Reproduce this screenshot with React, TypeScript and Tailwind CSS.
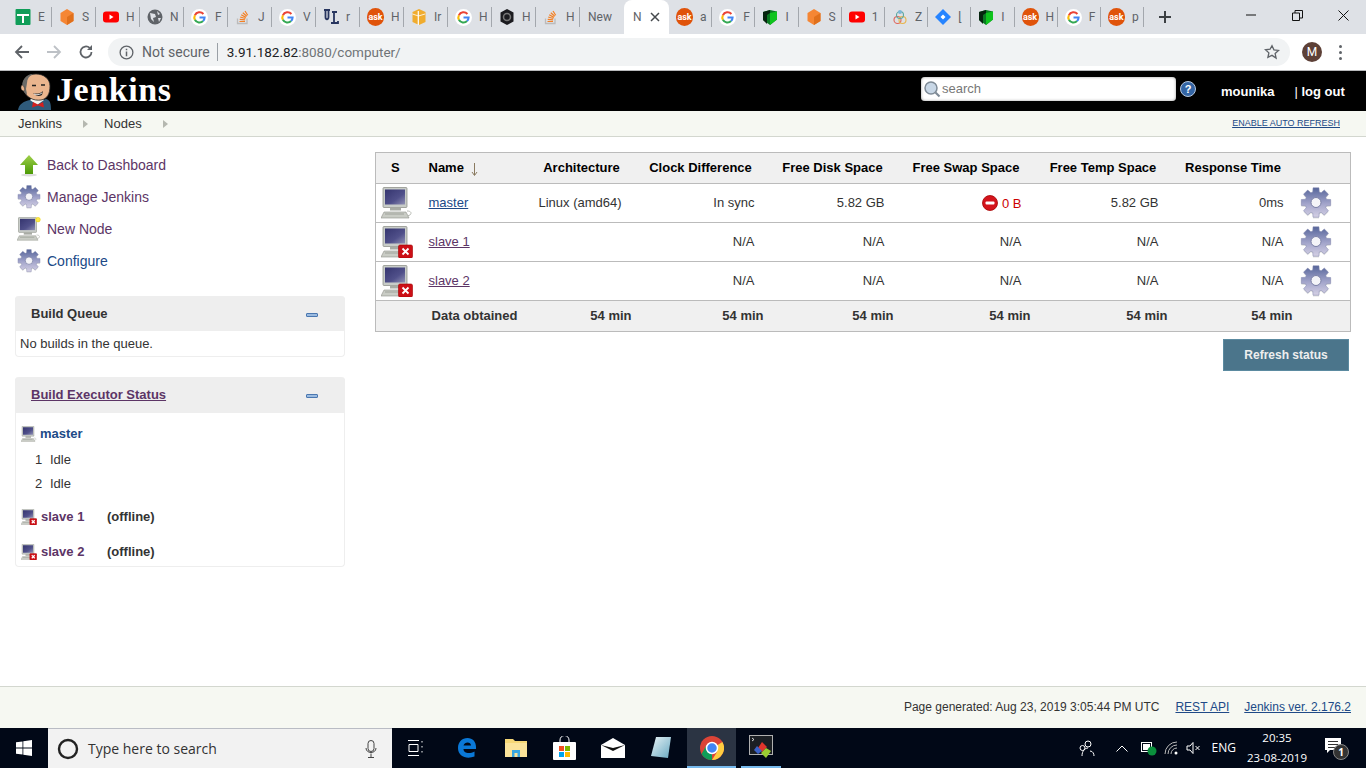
import React from "react";

const gearPath = (() => {
  const cx = 16, cy = 15.5, ro = 15, ri = 11, n = 8;
  let d = "";
  for (let i = 0; i < n; i++) {
    const a = (i / n) * Math.PI * 2 - Math.PI / 2;
    const w = 0.2, g = 0.3;
    const pts = [
      [ri, a - g], [ro, a - w], [ro, a + w], [ri, a + g],
    ];
    for (const [r, t] of pts) {
      d += (d ? "L" : "M") + (cx + r * Math.cos(t)).toFixed(2) + " " + (cy + r * Math.sin(t)).toFixed(2);
    }
  }
  return d + "Z";
})();

function Gear({ id, size = 32 }: { id: string; size?: number }) {
  return (
    <svg width={size} height={size} viewBox="0 0 32 32" className="block shrink-0">
      <defs>
        <linearGradient id={id} x1="0" y1="0" x2="0" y2="1">
          <stop offset="0" stopColor="#56659a" />
          <stop offset="0.55" stopColor="#a3a5cb" />
          <stop offset="1" stopColor="#d4d0e4" />
        </linearGradient>
      </defs>
      <path d={gearPath} fill="#000" opacity="0.12" transform="translate(0 1.2)" />
      <path d={gearPath} fill={`url(#${id})`} stroke="#8187ad" strokeWidth="0.5" />
      <circle cx="16" cy="15.5" r="5" fill="#f4f4f8" stroke="#7b80a6" strokeWidth="1" />
    </svg>
  );
}

function Computer({ id, size = 32, badge, star, tiny }: { id: string; size?: number; badge?: boolean; star?: boolean; tiny?: boolean }) {
  return (
    <svg width={size} height={size} viewBox="0 0 32 32" className="block shrink-0">
      <defs>
        <linearGradient id={id} x1="0" y1="0" x2="1" y2="1">
          <stop offset="0" stopColor="#35356f" />
          <stop offset="0.6" stopColor="#50508a" />
          <stop offset="1" stopColor="#9090b4" />
        </linearGradient>
      </defs>
      <rect x="2" y="0.500" width="24" height="20" rx="1" fill="#c8ccc8" stroke="#85887f" strokeWidth="0.7" />
      <rect x="4" y="2.500" width="20" height="15" fill={`url(#${id})`} />
      <rect x="9" y="20.500" width="11" height="3" fill="#a8aba4" />
      <path d="M3 25h22l3 6H0z" fill="#c9ccc5" stroke="#8e9189" strokeWidth="0.6" />
      <path d="M4 27h19" stroke="#8e9189" strokeWidth="0.7" />
      {!badge && <path d="M26 24c4 0 5 2 3 4l-3 1" fill="none" stroke="#b8bbb4" strokeWidth="1" />}
      {badge && (
        <g>
          <rect x="17.500" y="19" width="14" height="13" rx="1.500" fill="#cc0f16" stroke="#a40000" strokeWidth="0.6" />
          <path d="M21.500 22.500l6 6M27.500 22.500l-6 6" stroke="#fff" strokeWidth={tiny ? 2.4 : 1.8} />
        </g>
      )}
      {star && <circle cx="28" cy="3.500" r="3" fill="#fce94f" stroke="#edd400" strokeWidth="0.8" />}
    </svg>
  );
}

function Butler() {
  return (
    <svg width="36" height="38" viewBox="0 0 36 38" className="block shrink-0">
      <path d="M0 37c1-6 6-9 12-10l8 1 8-2c4 1 5 4 5 11z" fill="#2f5a7a" />
      <path d="M12 27l7 5 7-5-2-2H14z" fill="#f4f4f0" />
      <path d="M15 29l5 2.500 5-2.500 1 5.500-6-2-6 2z" fill="#d3201f" />
      <path d="M5 16C3 6 10 1 18 1c8 0 14 5 14 12 0 8-3 13-9 14-7 1-15-2-18-11z" fill="#eab58e" stroke="#2a2a2a" strokeWidth="0.8" />
      <path d="M5 17C2 8 8 1 15 1c-4 2-6 5-6 9l-1 6 1 5c-2 0-3-2-4-4z" fill="#6b6b68" />
      <path d="M4 12c-2 2-1 6 2 6 1 0 1-5-2-6z" fill="#eab58e" stroke="#2a2a2a" strokeWidth="0.5" />
      <path d="M14 12.500h4M23 12h4" stroke="#222" strokeWidth="1.300" />
      <path d="M15 20c3 1 7 1 10-2l-1 4c-3 2-6 1-9-2z" fill="#2a2a2a" />
      <path d="M16 21c3 1 5 1 8-1" stroke="#fff" strokeWidth="0.8" fill="none" />
    </svg>
  );
}

function G() {
  return (
    <svg width="17" height="17" viewBox="0 0 20 20" className="block shrink-0">
      <circle cx="10" cy="10" r="10" fill="#fff" />
      <path d="M14.600 5.900A6 6 0 0 0 4.600 7.300" fill="none" stroke="#ea4335" strokeWidth="2.400" />
      <path d="M4.600 7.300a6 6 0 0 0 0 5.400" fill="none" stroke="#fbbc05" strokeWidth="2.400" />
      <path d="M4.600 12.700a6 6 0 0 0 9.600 1.500" fill="none" stroke="#34a853" strokeWidth="2.400" />
      <path d="M14.200 14.200A6 6 0 0 0 16 10h-6" fill="none" stroke="#4285f4" strokeWidth="2.400" />
    </svg>
  );
}

function Ask() {
  return (
    <span className="flex h-[18px] w-[17px] shrink-0 items-center justify-center rounded-full bg-[#e0530a] text-[9px] font-bold leading-none text-white">ask</span>
  );
}

function Fav({ k }: { k: string }) {
  const s = { width: 16, height: 16, viewBox: "0 0 16 16", className: "block shrink-0" };
  switch (k) {
    case "sheet":
      return <svg {...s}><rect x="0.500" y="0" width="15" height="16" rx="1" fill="#0f9d58" /><path d="M2 5h12v2H9v7H7V7H2z" fill="#fff" /></svg>;
    case "box":
      return <svg {...s}><path d="M8 0l6.500 4v8L8 16l-6.500-4V4z" fill="#f58634" /><path d="M8 8l6.500-4v8L8 16z" fill="#e0701c" /></svg>;
    case "yt":
      return <svg {...s}><rect x="0" y="2.500" width="16" height="11" rx="3" fill="#f00" /><path d="M6.500 5.500l4 2.500-4 2.500z" fill="#fff" /></svg>;
    case "globe":
      return <svg {...s}><circle cx="8" cy="8" r="7.500" fill="#5f6368" /><path d="M3 4l5 1 1 3-3 1 1 4-3-3zM10 2l3 3-2 1zM11 9l3 0-2 4z" fill="#dee1e6" /></svg>;
    case "so":
      return <svg {...s}><path d="M2.500 9.500v5h9.500v-5" fill="none" stroke="#bcbbbb" strokeWidth="1.300" /><path d="M4.500 12.500h5.500M4.700 10.300l5.400.6M5.200 8l5.200 1.500M6.200 5.800l4.700 2.600M7.800 3.700l4 3.500M10 2l2.700 4.300" stroke="#f48024" strokeWidth="1.200" /></svg>;
    case "ul":
      return <svg {...s}><path d="M1 1h6M2.500 1v7c0 3 3 3 3 0V1M9 3h5M11 3v11M8 14h7v-2" fill="none" stroke="#27355f" strokeWidth="1.800" /></svg>;
    case "aws":
      return <svg {...s}><path d="M8 0l6.500 3v10L8 16l-6.500-3V3z" fill="#f0ac2e" /><path d="M7.300 2v14" stroke="#fff" strokeWidth="1.200" /><path d="M1.500 5l6 2 6.500-2" fill="none" stroke="#fff" strokeWidth="0.800" /></svg>;
    case "hex":
      return <svg {...s}><path d="M8 0l6.500 3.500v9L8 16l-6.500-3.500v-9z" fill="#1b1b1f" /><circle cx="8" cy="8" r="3.500" fill="none" stroke="#777" strokeWidth="1.500" /></svg>;
    case "shield":
      return <svg {...s}><path d="M8 1l7 1.500v8L8 16 1 11V3z" fill="#0a7a22" /><path d="M1 3l7-2v3L5 6v9l-4-4z" fill="#06240f" /><path d="M8 4l7-1.500v8L8 16z" fill="#0ec41d" /></svg>;
    case "rings":
      return <svg {...s}><circle cx="5.500" cy="11" r="3.500" fill="none" stroke="#e0645a" strokeWidth="1.100" /><circle cx="10.500" cy="11" r="3.500" fill="none" stroke="#e9b44c" strokeWidth="1.100" /><circle cx="8" cy="6" r="3.500" fill="none" stroke="#5ba7a0" strokeWidth="1.100" /><circle cx="8" cy="3" r="2" fill="#7db6d6" /></svg>;
    case "jira":
      return <svg {...s}><path d="M8 0l8 8-8 8-8-8z" fill="#2684ff" /><path d="M8 5.500L10.500 8 8 10.500 5.500 8z" fill="#fff" /></svg>;
    default:
      return null;
  }
}

type TabDef = { k: string; t: string };
const leftTabs: TabDef[] = [
  { k: "sheet", t: "E" }, { k: "box", t: "S" }, { k: "yt", t: "H" }, { k: "globe", t: "N" },
  { k: "g", t: "F" }, { k: "so", t: "J" }, { k: "g", t: "V" }, { k: "ul", t: "r" },
  { k: "ask", t: "H" }, { k: "aws", t: "Ir" }, { k: "g", t: "H" }, { k: "hex", t: "H" }, { k: "so", t: "H" },
];
const rightTabs: TabDef[] = [
  { k: "ask", t: "a" }, { k: "g", t: "F" }, { k: "shield", t: "I" }, { k: "box", t: "S" },
  { k: "yt", t: "1" }, { k: "rings", t: "Z" }, { k: "jira", t: "[" }, { k: "shield", t: "I" },
  { k: "ask", t: "H" }, { k: "g", t: "F" }, { k: "ask", t: "p" },
];

function Tab({ tab, narrow }: { tab: TabDef; narrow?: boolean }) {
  return (
    <div className={`flex h-[20px] shrink-0 items-center gap-[7px] border-r border-[#a3a7ad] pl-[7px] ${narrow ? "w-[43.200px]" : "w-[44px]"}`}>
      {tab.k === "g" ? <G /> : tab.k === "ask" ? <Ask /> : <Fav k={tab.k} />}
      <span className="w-[8px] overflow-hidden text-[12px] leading-none text-[#5f6368]">{tab.t}</span>
    </div>
  );
}

function TabStrip() {
  return (
    <div className="flex h-[34px] items-center bg-[#dee1e6] pl-[8px] font-['Roboto',sans-serif]">
      {leftTabs.map((t, i) => <Tab key={i} tab={t} />)}
      <div className="flex h-[20px] w-[44px] shrink-0 items-center overflow-hidden pl-[8px] text-[12px] text-[#5f6368]">New</div>
      <div className="flex h-[34px] w-[45px] shrink-0 items-center justify-between self-end rounded-t-[8px] bg-white px-[9px] text-[12px] text-[#5f6368]">
        <span>N</span>
        <svg width="10" height="10" viewBox="0 0 10 10"><path d="M1 1l8 8M9 1l-8 8" stroke="#45494d" strokeWidth="1.500" /></svg>
      </div>
      {rightTabs.map((t, i) => <Tab key={i} tab={t} narrow />)}
      <div className="ml-[11px] flex w-[20px] items-center justify-center">
        <svg width="14" height="14" viewBox="0 0 14 14"><path d="M7 1v12M1 7h12" stroke="#3c4043" strokeWidth="2" /></svg>
      </div>
      <div className="ml-auto flex h-[34px] items-start">
        <div className="flex h-[30px] w-[46px] items-center justify-center"><svg width="10" height="10" viewBox="0 0 10 10"><path d="M0 5h10" stroke="#111" /></svg></div>
        <div className="flex h-[30px] w-[46px] items-center justify-center"><svg width="11" height="11" viewBox="0 0 11 11"><path d="M.5 3h7v7.500h-7zM3 3V.500h7.500V8H8" fill="none" stroke="#111" /></svg></div>
        <div className="flex h-[30px] w-[46px] items-center justify-center"><svg width="11" height="11" viewBox="0 0 11 11"><path d="M.5.500l10 10M10.500.500l-10 10" stroke="#111" /></svg></div>
      </div>
    </div>
  );
}

function Toolbar() {
  return (
    <div className="flex h-[37px] items-start border-b border-[#b7b9bb] bg-white pt-[4px] font-['Roboto',sans-serif]">
      <div className="flex h-[28px] w-[108px] shrink-0 items-center pl-[14px]">
        <svg width="16" height="16" viewBox="0 0 16 16" className="block"><path d="M15 8H2M8 2L2 8l6 6" fill="none" stroke="#5f6368" strokeWidth="1.800" /></svg>
        <svg width="16" height="16" viewBox="0 0 16 16" className="ml-[16px] block"><path d="M1 8h13M8 2l6 6-6 6" fill="none" stroke="#bdc1c6" strokeWidth="1.800" /></svg>
        <svg width="16" height="16" viewBox="0 0 16 16" className="ml-[16px] block"><path d="M13.500 8A5.500 5.500 0 1 1 11.700 3.900" fill="none" stroke="#5f6368" strokeWidth="1.800" /><path d="M14 1v5H9z" fill="#5f6368" /></svg>
      </div>
      <div className="flex h-[28px] w-[1182px] shrink-0 items-center rounded-[14px] bg-[#f1f3f4] pl-[11px] text-[14px]">
        <svg width="15" height="15" viewBox="0 0 16 16" className="block shrink-0"><circle cx="8" cy="8" r="6.800" fill="none" stroke="#5f6368" strokeWidth="1.400" /><path d="M8 7v5M8 4v1.600" stroke="#5f6368" strokeWidth="1.600" /></svg>
        <span className="ml-[8px] text-[#5f6368]">Not secure</span>
        <span className="ml-[7px] h-[18px] w-px bg-[#9aa0a6]" />
        <span className="ml-[9px] text-[13.500px] text-[#202124]">3.91.182.82<span className="text-[#6f7377]">:8080/computer/</span></span>
        <svg width="16" height="16" viewBox="0 0 24 24" className="ml-auto mr-[10px] block"><path d="M12 2.500l2.900 6.300 6.900.8-5.100 4.700 1.400 6.800L12 17l-6.100 3.100 1.400-6.800-5.100-4.700 6.900-.8z" fill="none" stroke="#5f6368" strokeWidth="2" /></svg>
      </div>
      <div className="ml-[12px] flex h-[28px] w-[20px] items-center justify-center rounded-full">
        <span className="flex h-[20px] w-[20px] items-center justify-center rounded-full bg-[#5d4037] text-[12px] text-white">M</span>
      </div>
      <div className="ml-[17px] flex h-[28px] flex-col items-center justify-center gap-[3px]">
        <span className="h-[3px] w-[3px] rounded-full bg-[#5f6368]" />
        <span className="h-[3px] w-[3px] rounded-full bg-[#5f6368]" />
        <span className="h-[3px] w-[3px] rounded-full bg-[#5f6368]" />
      </div>
    </div>
  );
}

function Header() {
  return (
    <div className="flex h-[40px] items-center bg-black pl-[18px] text-white">
      <div className="flex h-[40px] items-end"><Butler /></div>
      <span className="mb-[2px] ml-[2px] w-[115px] whitespace-nowrap font-['Liberation_Serif',serif] text-[34px] font-bold leading-none tracking-[0.6px]">Jenkins</span>
      <div className="mb-[4px] ml-[750px] flex h-[24px] w-[255px] items-center rounded-[4px] bg-white pl-[2px] shadow-[inset_0_0_3px_#999]">
        <svg width="18" height="18" viewBox="0 0 18 18" className="block shrink-0"><circle cx="8" cy="8" r="6" fill="#c8d7e6" stroke="#7e8a96" strokeWidth="1.500" /><path d="M12.500 12.500l4 4" stroke="#7e8a96" strokeWidth="2.200" /></svg>
        <span className="ml-[1px] text-[13px] text-[#777]">search</span>
      </div>
      <svg width="16" height="16" viewBox="0 0 16 16" className="mb-[4px] ml-[4px] block shrink-0">
        <circle cx="8" cy="8" r="7.500" fill="#3465a4" stroke="#b6c8df" />
        <text x="8" y="12" textAnchor="middle" fontSize="11" fontWeight="700" fill="#fff" fontFamily="Liberation Sans">?</text>
      </svg>
      <span className="ml-[25px] mt-[1px] text-[13px] font-bold">mounika</span>
      <span className="ml-[20px] mt-[1px] text-[13px] font-bold"><span className="font-normal">|</span> log out</span>
    </div>
  );
}

function Breadcrumb() {
  const Arrow = () => <svg width="5" height="8" viewBox="0 0 5 8" className="block"><path d="M0 0l5 4-5 4z" fill="#b5b8b0" /></svg>;
  return (
    <div className="flex h-[26px] items-center border-b border-[#d3d7cf] bg-[#f6f8f2] pl-[18px] text-[13px] text-[#333]">
      <span>Jenkins</span>
      <span className="ml-[21px]"><Arrow /></span>
      <span className="ml-[16px]">Nodes</span>
      <span className="ml-[21px]"><Arrow /></span>
      <span className="ml-auto mr-[26px] text-[9px] text-[#204a87] underline">ENABLE AUTO REFRESH</span>
    </div>
  );
}

function Side() {
  return (
    <div className="ml-[15px] w-[330px] shrink-0 pt-[12px] text-[14px]">
      <div className="flex h-[32px] items-center pl-[2px]">
        <svg width="24" height="24" viewBox="0 0 24 24" className="block shrink-0"><defs><linearGradient id="ua" x1="0" x2="0" y1="0" y2="1"><stop offset="0" stopColor="#9fd04a" /><stop offset="1" stopColor="#4c9a06" /></linearGradient></defs><ellipse cx="12" cy="22" rx="8" ry="1.500" fill="#ddd" /><path d="M12 2l9 10h-5v9H8v-9H3z" fill="url(#ua)" /></svg>
        <span className="ml-[6px] text-[#5c3566]">Back to Dashboard</span>
      </div>
      <div className="flex h-[32px] items-center pl-[2px]">
        <Gear id="g1" size={24} />
        <span className="ml-[6px] text-[#5c3566]">Manage Jenkins</span>
      </div>
      <div className="flex h-[32px] items-center pl-[2px]">
        <Computer id="c1" size={24} star />
        <span className="ml-[6px] text-[#5c3566]">New Node</span>
      </div>
      <div className="flex h-[32px] items-center pl-[2px]">
        <Gear id="g2" size={24} />
        <span className="ml-[6px] text-[#204a87]">Configure</span>
      </div>

      <div className="mt-[19px] h-[61px] rounded-[4px] border border-t-0 border-[#eeeeee]">
        <div className="-mx-px flex h-[35px] items-center justify-between rounded-t-[4px] bg-[#eeeeee] pl-[16px] pr-[27px] pt-px">
          <span className="text-[13px] font-bold text-[#333]">Build Queue</span>
          <span className="mt-[2px] h-[4px] w-[12px] rounded-[1px] border border-[#4a77b0] bg-[#9bbbe0]" />
        </div>
        <div className="pl-[4px] pt-[4px] text-[13px] leading-[18px] text-[#333]">No builds in the queue.</div>
      </div>

      <div className="mt-[20px] h-[190px] rounded-[4px] border border-t-0 border-[#eeeeee]">
        <div className="-mx-px flex h-[36px] items-center justify-between rounded-t-[4px] bg-[#eeeeee] pl-[16px] pr-[27px]">
          <span className="text-[13px] font-bold text-[#5c3566] underline">Build Executor Status</span>
          <span className="mt-[2px] h-[4px] w-[12px] rounded-[1px] border border-[#4a77b0] bg-[#9bbbe0]" />
        </div>
        <div className="text-[13px] text-[#333]">
          <div className="mt-[12px] flex h-[18px] items-center pl-[5px]">
            <Computer id="c2" size={16} />
            <span className="ml-[3px] font-bold text-[#204a87]">master</span>
          </div>
          <div className="mt-[8px] flex h-[18px] items-center pl-[19px]"><span className="w-[15px]">1</span><span>Idle</span></div>
          <div className="mt-[6px] flex h-[18px] items-center pl-[19px]"><span className="w-[15px]">2</span><span>Idle</span></div>
          <div className="mt-[15px] flex h-[18px] items-center pl-[5px]">
            <Computer id="c3" size={16} badge tiny />
            <span className="ml-[4px] w-[66px] font-bold text-[#5c3566]">slave 1</span>
            <span className="font-bold">(offline)</span>
          </div>
          <div className="mt-[17px] flex h-[18px] items-center pl-[5px]">
            <Computer id="c4" size={16} badge tiny />
            <span className="ml-[4px] w-[66px] font-bold text-[#5c3566]">slave 2</span>
            <span className="font-bold">(offline)</span>
          </div>
        </div>
      </div>
    </div>
  );
}

const thClass = "border border-[#bbbbbb] bg-[#f0f0f0] p-0 pl-[6px] text-center text-[13px] font-bold text-black";
const ftClass = "p-0 text-right text-[13px] font-bold text-[#333]";

function Row({ name, visited, offline, cells, id }: { name: string; visited?: boolean; offline?: boolean; cells: React.ReactNode[]; id: string }) {
  return (
    <tr className="h-[39px]">
      <td className="border-y border-l border-[#bbbbbb] p-0 pl-[5px]"><Computer id={id} badge={offline} /></td>
      <td className="border-y border-[#bbbbbb] p-0 pl-[14px] text-[13px]">
        <span className={`underline ${visited ? "text-[#5c3566]" : "text-[#204a87]"}`}>{name}</span>
      </td>
      {cells.map((c, i) => (
        i === 0
          ? <td key={i} className="whitespace-nowrap border-y border-[#bbbbbb] p-0 pl-[7px] text-[13px] text-[#333]">{c}</td>
          : <td key={i} className="border-y border-[#bbbbbb] p-0 pr-[9px] text-right text-[13px] text-[#333]">{c}</td>
      ))}
      <td className="border-y border-r border-[#bbbbbb] p-0 pl-[7px]"><Gear id={`${id}g`} /></td>
    </tr>
  );
}

function Main() {
  const NA = "N/A";
  return (
    <div className="ml-[30px] w-[975px] shrink-0 pt-[15px]">
      <table className="h-[180px] w-[975px] table-fixed border-collapse border border-[#bbbbbb]">
        <colgroup>
          <col className="w-[39px]" />
          <col className="w-[117px]" />
          <col className="w-[100px]" />
          <col className="w-[132px]" />
          <col className="w-[130px]" />
          <col className="w-[137px]" />
          <col className="w-[137px]" />
          <col className="w-[125px]" />
          <col className="w-[58px]" />
        </colgroup>
        <thead>
          <tr className="h-[31px]">
            <th className={`${thClass} !border-r-0 !pl-0`}>S</th>
            <th className={`${thClass} !border-x-0 !pl-[14px] !text-left`}>
              <span className="inline-flex items-center">
                Name
                <svg width="7" height="13" viewBox="0 0 7 13" className="ml-[7px] mt-[3px] block"><path d="M3.500 0v12M1 9l2.500 3.500L6 9" fill="none" stroke="#8a7a60" strokeWidth="1" /></svg>
              </span>
            </th>
            <th className={`${thClass} !border-x-0 !pl-0 whitespace-nowrap`}>Architecture</th>
            <th className={`${thClass} !border-x-0 whitespace-nowrap`}>Clock Difference</th>
            <th className={`${thClass} !border-x-0 !pl-[8px] whitespace-nowrap`}>Free Disk Space</th>
            <th className={`${thClass} !border-x-0 !pl-[8px] whitespace-nowrap`}>Free Swap Space</th>
            <th className={`${thClass} !border-x-0 !pl-[8px] whitespace-nowrap`}>Free Temp Space</th>
            <th className={`${thClass} !border-x-0 whitespace-nowrap`}>Response Time</th>
            <th className={`${thClass} !border-l-0`} />
          </tr>
        </thead>
        <tbody>
          <Row id="r1" name="master" cells={[
            "Linux (amd64)", "In sync", "5.82 GB",
            <span key="s" className="inline-flex items-center gap-[4px] align-middle text-[#cc0000]">
              <svg width="16" height="16" viewBox="0 0 16 16" className="block"><circle cx="8" cy="8" r="7.500" fill="#d4141c" stroke="#a40000" strokeWidth="0.800" /><rect x="3.500" y="6.500" width="9" height="3" rx="1" fill="#fff" /></svg>
              0 B
            </span>,
            "5.82 GB", "0ms",
          ]} />
          <Row id="r2" name="slave 1" visited offline cells={["", NA, NA, NA, NA, NA]} />
          <Row id="r3" name="slave 2" visited offline cells={["", NA, NA, NA, NA, NA]} />
          <tr className="h-[31px] bg-[#f0f0f0]">
            <td colSpan={2} className={`${ftClass} !pr-[14px] border-y border-l border-[#bbbbbb]`}>Data obtained</td>
            <td className={`${ftClass} border-y border-[#bbbbbb]`}>54 min</td>
            <td className={`${ftClass} border-y border-[#bbbbbb]`}>54 min</td>
            <td className={`${ftClass} border-y border-[#bbbbbb]`}>54 min</td>
            <td className={`${ftClass} border-y border-[#bbbbbb]`}>54 min</td>
            <td className={`${ftClass} border-y border-[#bbbbbb]`}>54 min</td>
            <td className={`${ftClass} border-y border-[#bbbbbb]`}>54 min</td>
            <td className="border-y border-r border-[#bbbbbb]" />
          </tr>
        </tbody>
      </table>
      <div className="mt-[7px] flex justify-end pr-px">
        <button className="h-[32px] w-[126px] border border-[#5b8aa0] bg-[#4b758b] text-[12px] font-bold text-[#eeeeee]">Refresh status</button>
      </div>
    </div>
  );
}

function Footer() {
  return (
    <div className="flex h-[42px] items-start justify-end gap-[15px] border-t border-[#d3d7cf] bg-[#f6f8f2] pr-[15px] pt-[13px] text-[12px] leading-[14px] text-[#333]">
      <span className="mr-px">Page generated: Aug 23, 2019 3:05:44 PM UTC</span>
      <span className="text-[#204a87] underline">REST API</span>
      <span className="text-[#204a87] underline">Jenkins ver. 2.176.2</span>
    </div>
  );
}

function Taskbar() {
  const Slot = ({ w, children, active, under }: { w: number; children: React.ReactNode; active?: boolean; under?: boolean }) => (
    <div style={{ width: w }} className={`relative flex h-[40px] shrink-0 items-center justify-center ${active ? "bg-[#2b3443]" : ""}`}>
      {children}
      {under && <span className="absolute bottom-0 left-0 right-0 h-[2px] bg-[#76b9ed]" />}
    </div>
  );
  return (
    <div className="flex h-[40px] items-center bg-[#010817] font-['Open_Sans',sans-serif] text-white">
      <Slot w={48}>
        <svg width="16" height="16" viewBox="0 0 16 16"><path d="M0 2.300l6.500-.9v6.200H0zM7.300 1.300L16 0v7.600H7.300zM0 8.400h6.500v6.200L0 13.700zM7.300 8.400H16V16l-8.700-1.300z" fill="#fff" /></svg>
      </Slot>
      <div className="flex h-[40px] w-[344px] shrink-0 items-center border-t border-[#b9bcc4] bg-[#f2f2f2] pl-[9px]">
        <svg width="22" height="22" viewBox="0 0 22 22" className="block shrink-0"><circle cx="11" cy="11" r="9" fill="none" stroke="#222" strokeWidth="2.400" /></svg>
        <span className="ml-[9px] text-[14px] text-[#333]">Type here to search</span>
        <svg width="12" height="18" viewBox="0 0 12 18" className="ml-auto mr-[15px] block"><rect x="3" y="0.500" width="6" height="11" rx="3" fill="none" stroke="#444" /><path d="M1 8c0 6 10 6 10 0M6 13.500V17M3 17.500h6" fill="none" stroke="#444" /></svg>
      </div>
      <Slot w={48}>
        <svg width="16" height="16" viewBox="0 0 16 16"><path d="M0 .500h11M0 15.500h11M1 4.500h9v7H1zM14 1v1.500M14 6v1.500M14 11v1.500" fill="none" stroke="#fff" /></svg>
      </Slot>
      <div className="w-[3px] shrink-0" />
      <Slot w={48.5}>
        <svg width="22" height="22" viewBox="0 0 22 22"><path d="M2 11C2 5 6 1 11.500 1 17 1 20.500 5 20 12H7.500c0 4 5.500 5.500 11 2.500v5c-8 3-16.500 0-16.500-8.500zM7.500 8.500H15C15 4.500 8.500 4.500 7.500 8.500z" fill="#0a78d7" /></svg>
      </Slot>
      <Slot w={48.5}>
        <svg width="22" height="20" viewBox="0 0 22 20"><path d="M0 1h8l2 2h12v16H0z" fill="#f6d776" /><path d="M0 5h22v14H0z" fill="#fbe39a" /><path d="M7 19v-7h8v7h-2.500v-4h-3v4z" fill="#3aa7e0" /></svg>
      </Slot>
      <Slot w={48.5}>
        <svg width="23" height="24" viewBox="0 0 23 24"><path d="M7 6V4a4.500 4.500 0 0 1 9 0v2" fill="none" stroke="#fff" /><rect x="0" y="6" width="23" height="18" rx="1" fill="#fff" /><rect x="6" y="10" width="5" height="5" fill="#f25022" /><rect x="12" y="10" width="5" height="5" fill="#7fba00" /><rect x="6" y="16" width="5" height="5" fill="#00a4ef" /><rect x="12" y="16" width="5" height="5" fill="#ffb900" /></svg>
      </Slot>
      <Slot w={48.5}>
        <svg width="24" height="20" viewBox="0 0 24 20"><path d="M0 7L12 0l12 7v13H0z" fill="#fff" /><path d="M0 7l12 6 12-6-12 3z" fill="#111" /></svg>
      </Slot>
      <Slot w={48.5}>
        <svg width="22" height="24" viewBox="0 0 22 24"><defs><linearGradient id="nt" x1="0" x2="1" y1="0" y2="1"><stop offset="0" stopColor="#e8f3f6" /><stop offset="1" stopColor="#69a9c2" /></linearGradient></defs><path d="M6 1h15l-3 21-17-2z" fill="url(#nt)" /></svg>
      </Slot>
      <div className="w-[1.500px] shrink-0" />
      <Slot w={49} active under>
        <svg width="24" height="24" viewBox="0 0 24 24"><circle cx="12" cy="12" r="12" fill="#db4437" /><path d="M12 24a12 12 0 0 1-10.400-6L6 10l6 6z" fill="#0f9d58" /><path d="M22.400 6A12 12 0 0 1 12 24l5-8-1-6z" fill="#ffcd40" /><circle cx="12" cy="12" r="5.500" fill="#4285f4" stroke="#fff" strokeWidth="1.500" /></svg>
      </Slot>
      <div className="w-[5px] shrink-0" />
      <Slot w={40} under>
        <svg width="24" height="26" viewBox="0 0 24 26"><rect x="0.500" y="0.500" width="23" height="19" fill="#1b1f24" stroke="#b0b0b0" /><path d="M3 3l2 1.500L3 6" stroke="#fff" fill="none" strokeWidth="0.800" /><path d="M13 7l5 5-5 5-4-4z" fill="#e0352b" /><path d="M8 11l5 5-4 3-4-4z" fill="#3b62c8" /><path d="M17 13l5 3-5 7-5-5z" fill="#9acd32" /></svg>
      </Slot>
      <div className="ml-auto flex h-[40px] items-center">
        <svg width="18" height="18" viewBox="0 0 18 18" className="block"><circle cx="10" cy="5" r="3" fill="none" stroke="#fff" /><path d="M4 17c0-5 3-8 6-8M12 12c3 0 4 3 4 5" fill="none" stroke="#fff" /><circle cx="4.500" cy="9" r="2.500" fill="none" stroke="#fff" /></svg>
        <svg width="12" height="7" viewBox="0 0 12 7" className="ml-[20px] block"><path d="M.5 6.500L6 1l5.500 5.500" fill="none" stroke="#fff" /></svg>
        <svg width="16" height="16" viewBox="0 0 16 16" className="ml-[13px] block"><rect x="0.500" y="2.500" width="10" height="9" fill="none" stroke="#fff" /><rect x="2" y="4" width="7" height="6" fill="#fff" /><circle cx="11" cy="11" r="4.500" fill="#0a8f3c" /></svg>
        <svg width="15" height="14" viewBox="0 0 15 14" className="ml-[7px] block"><path d="M1 13A12 12 0 0 1 13 1M4 13a9 9 0 0 1 9-9M7 13a6 6 0 0 1 6-6" fill="none" stroke="#bbb" /><circle cx="12" cy="12" r="1.500" fill="#fff" /></svg>
        <svg width="15" height="14" viewBox="0 0 15 14" className="ml-[7px] block"><path d="M1 5h3l3-3.500v11L4 9H1zM9.500 5l4 4M13.500 5l-4 4" fill="none" stroke="#fff" /></svg>
        <span className="ml-[11px] text-[12px]">ENG</span>
        <div className="ml-[9px] flex w-[64px] flex-col items-center text-[11.500px] leading-[20px]">
          <span>20:35</span>
          <span>23-08-2019</span>
        </div>
        <div className="relative ml-[16px] mr-[21px] h-[24px] w-[20px]">
          <svg width="16" height="16" viewBox="0 0 16 16" className="absolute left-0 top-[2px] block"><path d="M0 0h16v12H5l-3 3v-3H0z" fill="#fff" /><path d="M3 3.500h10M3 6.500h10M3 9.500h7" stroke="#333" /></svg>
          <span className="absolute left-[8px] top-[8px] flex h-[16px] w-[16px] items-center justify-center rounded-full border border-[#888] bg-[#333] text-[10px] font-bold leading-none">1</span>
        </div>
      </div>
    </div>
  );
}

export default function App() {
  return (
    <div className="flex h-[768px] w-[1366px] flex-col overflow-hidden bg-white font-['Liberation_Sans',Arial,sans-serif]">
      <TabStrip />
      <Toolbar />
      <Header />
      <Breadcrumb />
      <div className="flex min-h-0 flex-1 items-start">
        <Side />
        <Main />
      </div>
      <Footer />
      <Taskbar />
    </div>
  );
}
